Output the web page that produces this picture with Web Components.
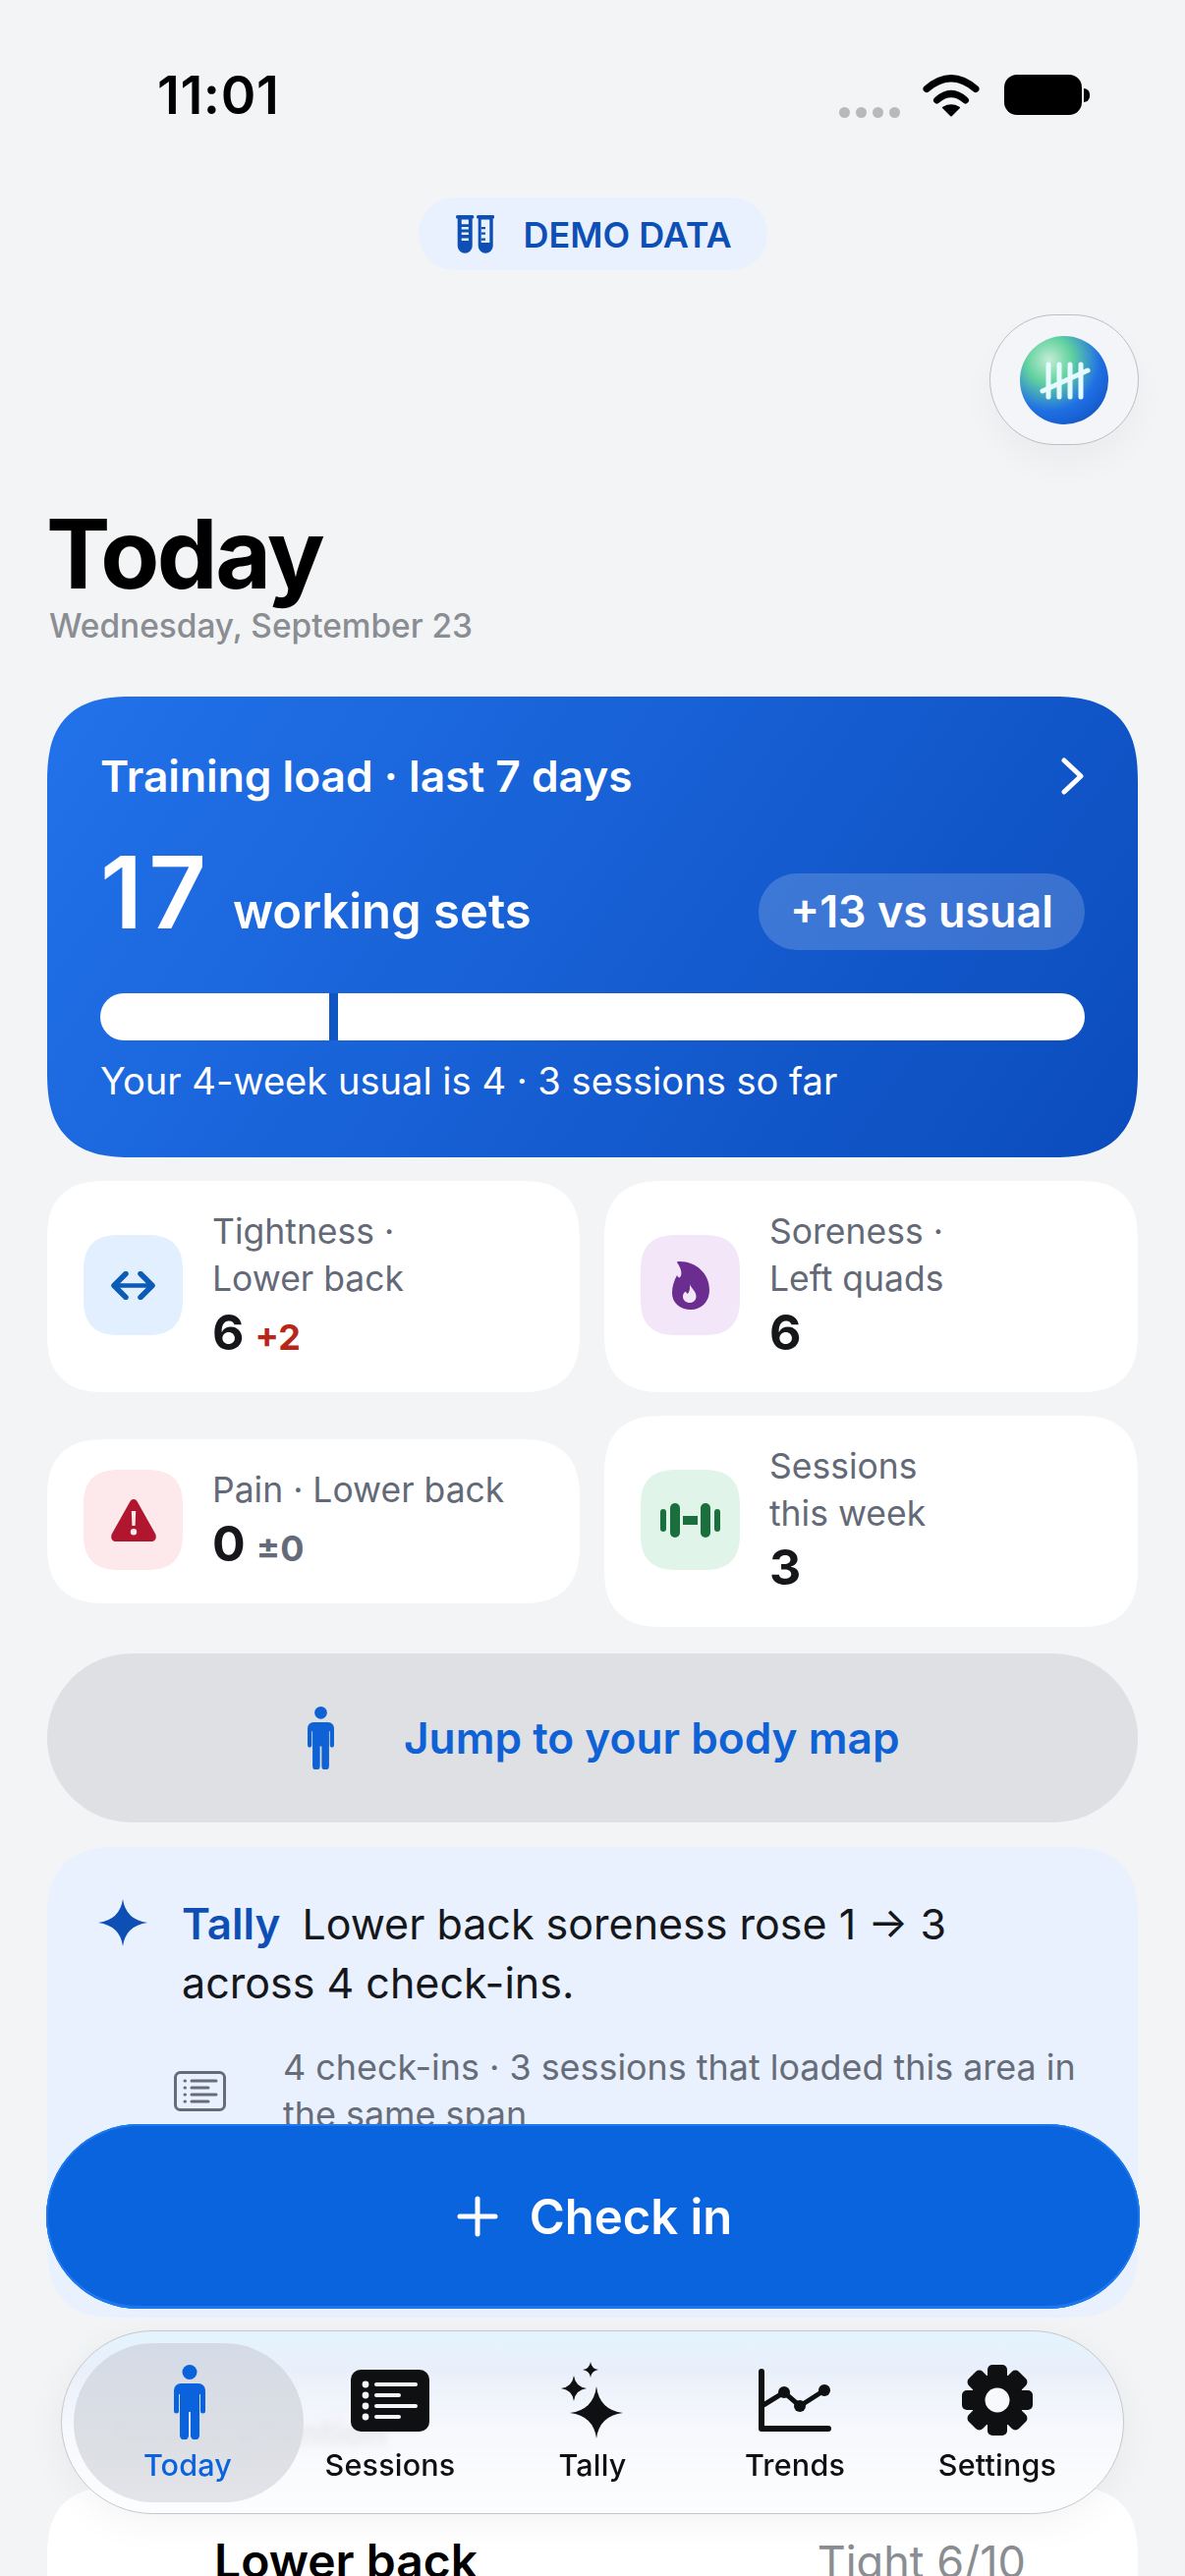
<!DOCTYPE html>
<html lang="en">
<head>
<meta charset="utf-8">
<title>Today</title>
<style>
  html, body { margin: 0; padding: 0; background: #f3f4f6; }
  body { width: 1206px; height: 2622px; overflow: hidden; position: relative; font-family: Inter, "Liberation Sans", sans-serif; }
</style>
</head>
<body>
<today-screen>
  <status-bar time="11:01"></status-bar>
  <demo-pill>DEMO DATA</demo-pill>
  <logo-button></logo-button>
  <page-title date="Wednesday, September 23">Today</page-title>
  <load-card title="Training load · last 7 days" count="17" unit="working sets" delta="+13 vs usual" note="Your 4-week usual is 4 · 3 sessions so far"></load-card>
  <metric-grid>
    <metric-card label="Tightness ·&#10;Lower back" value="6" delta="+2" tone="up" tile="#e2effe">
      <svg width="45" height="29" viewBox="0 0 45 29" fill="none" stroke="#0c5cb6" stroke-linecap="round" stroke-linejoin="round"><path d="M15 2.500 3 14.500l12 12M30 2.500l12 12-12 12" stroke-width="5.500"/><path d="M3 14.500h39" stroke-width="4.500"/></svg>
    </metric-card>
    <metric-card label="Soreness ·&#10;Left quads" value="6" tile="#f2e6f8">
      <svg width="38" height="49" viewBox="0 0 38 49"><path fill="#6b2d8f" fill-rule="evenodd" d="M5 1C4.500.3 6 0 8 0c16 0 30 12 30 29 0 12-8 20-19 20C8 49 0 42 0 32c0-7 2-12 5-18 1 2 2 3 3 2 2.500-2 2-8-3-15zM18 23c1 4 6.500 7 6.500 12.500 0 4-3 6.500-6.500 6.500-4 0-7-2.500-7-6.500 0-2.500 1.500-4.500 3-5 .5 1.500 1 2.500 2 2 1.500-1 2.500-5.500 2-9.500z"/></svg>
    </metric-card>
    <metric-card label="Pain · Lower back" value="0" delta="±0" tone="flat" tile="#fde8ec">
      <svg width="46" height="43" viewBox="0 0 46 43"><path fill="#b0172e" d="M23 0c2 0 3 1 4 3l18 32c2 4 0 8-4 8H5c-4 0-6-4-4-8L19 3c1-2 2-3 4-3z"/><path fill="#fde8ec" d="M20.800 12h4.400l-.6 15h-3.200zM23 30a3.200 3.200 0 1 1 0 6.400 3.200 3.200 0 0 1 0-6.400z"/></svg>
    </metric-card>
    <metric-card label="Sessions&#10;this week" value="3" tile="#e0f4e9">
      <svg width="61" height="35" viewBox="0 0 61 35" fill="#1b6f3c"><rect x="0" y="6" width="6" height="23" rx="3"/><rect x="10" y="0" width="10" height="35" rx="5"/><rect x="23" y="13" width="15" height="9"/><rect x="41" y="0" width="10" height="35" rx="5"/><rect x="55" y="6" width="6" height="23" rx="3"/></svg>
    </metric-card>
  </metric-grid>
  <jump-button>Jump to your body map</jump-button>
  <tally-card name="Tally" text="Lower back soreness rose 1 → 3 across 4 check-ins." evidence="4 check-ins · 3 sessions that loaded this area in the same span"></tally-card>
  <section-title>Needs attention</section-title>
  <area-row name="Lower back" state="Tight 6/10"></area-row>
</today-screen>

<check-in-button>Check in</check-in-button>

<tab-bar>
  <tab-item label="Today" active>
    <svg style="transform: translate(2px, 2px)" width="32" height="76" viewBox="0 0 32 76" fill="#0a62dc"><circle cx="16" cy="7.500" r="7.500"/><path d="M7 19h18a7 7 0 0 1 7 7v21a2.500 2.500 0 0 1-5 0V30h-1v42a4.500 4.500 0 0 1-9 0V48h-2v24a4.500 4.500 0 0 1-9 0V30H5v17a2.500 2.500 0 0 1-5 0V26a7 7 0 0 1 7-7z"/></svg>
  </tab-item>
  <tab-item label="Sessions">
    <svg width="80" height="63" viewBox="0 0 80 63"><rect width="80" height="63" rx="10" fill="#0f1012"/><g fill="#f5f6fa"><circle cx="15" cy="15" r="3.400"/><circle cx="15" cy="26" r="3.400"/><circle cx="15" cy="37" r="3.400"/><circle cx="15" cy="48" r="3.400"/><rect x="24" y="13" width="44" height="4" rx="2"/><rect x="24" y="24" width="27" height="4" rx="2"/><rect x="24" y="35" width="44" height="4" rx="2"/><rect x="24" y="46" width="27" height="4" rx="2"/></g></svg>
  </tab-item>
  <tab-item label="Tally">
    <svg width="64" height="78" viewBox="0 0 64 78" fill="#0f1012"><path d="M36 25Q39 49 63 52 39 55 36 78 33 55 9 52 33 49 36 25z"/><path d="M13 14Q14.500 25.500 26 27 14.500 28.500 13 40 11.500 28.500 0 27 11.500 25.500 13 14z"/><path d="M30 0Q31 7 38 8 31 9 30 16 29 9 22 8 29 7 30 0z"/></svg>
  </tab-item>
  <tab-item label="Trends">
    <svg width="74" height="64" viewBox="0 0 74 64" fill="#0f1012"><path d="M3 3v58h68" fill="none" stroke="#0f1012" stroke-width="6" stroke-linecap="round" stroke-linejoin="round"/><path d="M5 37 26 24l16 14 25-16" fill="none" stroke="#0f1012" stroke-width="5"/><circle cx="26" cy="24" r="6"/><circle cx="42" cy="38" r="6"/><circle cx="67" cy="22" r="6"/></svg>
  </tab-item>
  <tab-item label="Settings">
    <svg width="72" height="72" viewBox="0 0 72 72" fill="#0f1012"><circle cx="36" cy="36" r="27"/><g><rect x="26" y="0" width="20" height="18" rx="5"/><rect x="26" y="54" width="20" height="18" rx="5"/><rect x="26" y="0" width="20" height="18" rx="5" transform="rotate(45 36 36)"/><rect x="26" y="54" width="20" height="18" rx="5" transform="rotate(45 36 36)"/><rect x="26" y="0" width="20" height="18" rx="5" transform="rotate(90 36 36)"/><rect x="26" y="54" width="20" height="18" rx="5" transform="rotate(90 36 36)"/><rect x="26" y="0" width="20" height="18" rx="5" transform="rotate(135 36 36)"/><rect x="26" y="54" width="20" height="18" rx="5" transform="rotate(135 36 36)"/></g><circle cx="36" cy="36" r="12.500" fill="#f8f9fc"/></svg>
  </tab-item>
</tab-bar>

<script>
class Base extends HTMLElement {
  constructor() {
    super();
    this.attachShadow({mode: 'open'});
  }

  connectedCallback() {
    this.shadowRoot.innerHTML = this.render();
  }

  attr(name) {
    return this.getAttribute(name) || '';
  }
}

class TodayScreen extends Base {
  render() {
    return `
      <style>
        :host { display: flex; flex-direction: column; width: 1206px; }
      </style>
      <slot></slot>
    `;
  }
}

class StatusBar extends Base {
  render() {
    return `
      <style>
        :host { display: flex; align-items: flex-start; justify-content: space-between; height: 201px; box-sizing: border-box; padding: 67px 97px 0 160px; }
        .time { font: 600 54px/60px Inter, sans-serif; color: #000; letter-spacing: .6px; }
        .right { display: flex; align-items: flex-start; margin-top: 9px; }
        .dots { display: flex; gap: 6px; margin: 33px 23px 0 0; }
        .dots i { width: 11px; height: 11px; border-radius: 50%; background: #b8b9bc; }
        .wifi { margin-right: 25px; display: block; }
        .batt { width: 79px; height: 41px; border-radius: 13px; background: #000; position: relative; }
        .nub { width: 6px; height: 14px; background: #000; border-radius: 0 7px 7px 0; margin: 14px 0 0 2px; }
      </style>
      <div class="time">${this.attr('time')}</div>
      <div class="right">
        <div class="dots"><i></i><i></i><i></i><i></i></div>
        <svg class="wifi" width="58" height="43" viewBox="0 0 58 43" fill="none" stroke="#000" stroke-linecap="round"><path d="M4 14.500Q29-7 54 14.500" stroke-width="7"/><path d="M14.500 26Q29 13 43.500 26" stroke-width="7"/><path d="M21 33.500Q29 29 37 33.500L29 41.500z" fill="#000" stroke-width="2" stroke-linejoin="round"/></svg>
        <div class="batt"></div><div class="nub"></div>
      </div>
    `;
  }
}

class DemoPill extends Base {
  render() {
    return `
      <style>
        :host { display: flex; align-self: center; align-items: center; gap: 30px; height: 74px; width: 355px; box-sizing: border-box; padding-left: 38px; border-radius: 37px; background: #e9f1fe; color: #0d4fb5; font: 600 36px/44px Inter, sans-serif; white-space: nowrap; }
        svg { flex: none; }
        span { margin-top: 2px; }
      </style>
      <svg width="39" height="39" viewBox="0 0 39 39" fill="#0d4fb5">
        <rect x="0" y="0" width="18.300" height="3.500" rx="1.500"/><rect x="21" y="0" width="18.300" height="3.500" rx="1.500"/>
        <path d="M1.700 2h15v29.200a7.500 7.500 0 0 1-15 0z"/><path d="M22.700 2h15v29.200a7.500 7.500 0 0 1-15 0z"/>
        <path fill="#e9f1fe" d="M5.700 4.500h7.200v4.800H5.700zM5.700 12h7.200v2.500H5.700zM5.700 17.500h7.200V20H5.700zM5.700 23.500h7.200V26H5.700zM25.700 4.500h8.600v23.500h-8.600z"/>
        <path d="M25.700 12H30v2.200h-4.300zM25.700 17.500H30v2.200h-4.300zM25.700 23.500H30v2.200h-4.300z"/>
      </svg>
      <span><slot></slot></span>
    `;
  }
}

class LogoButton extends Base {
  render() {
    return `
      <style>
        :host { display: flex; align-self: flex-end; align-items: center; justify-content: center; width: 152px; height: 133px; box-sizing: border-box; margin: 45px 47px 0 0; border-radius: 67px; background: #f4f5f8; border: 1.500px solid #bdbec1; box-shadow: 0 18px 34px rgba(0,0,0,.035); }
        .orb { width: 90px; height: 90px; border-radius: 50%; background: radial-gradient(circle at 33% 27%, #c4ecd6 0, #62d29f 26%, #1f70e4 58%, #0a45b5 100%); }
        svg { display: block; }
      </style>
      <div class="orb">
        <svg width="90" height="90" viewBox="0 0 90 90" fill="none" stroke="#e6fbff" stroke-width="5" stroke-linecap="round">
          <path d="M29 29v33M40 29v33M51 29v33M62 29v33M23 56l46-21"/>
        </svg>
      </div>
    `;
  }
}

class PageTitle extends Base {
  render() {
    return `
      <style>
        :host { display: block; padding: 56px 50px 0; }
        h1 { margin: 0 0 0 -3px; font: 700 98px/110px Inter, sans-serif; color: #000; letter-spacing: -2.500px; }
        p { margin: -2px 0 0; font: 500 33.400px/40px Inter, sans-serif; color: #8a8d92; }
      </style>
      <h1><slot></slot></h1>
      <p>${this.attr('date')}</p>
    `;
  }
}

class LoadCard extends Base {
  render() {
    return `
      <style>
        :host { display: block; margin: 52px 48px 0; height: 469px; box-sizing: border-box; padding: 52px 54px 0; border-radius: 88px; corner-shape: superellipse(1.4); background: linear-gradient(125deg, #2272ea 0%, #0b4cbd 100%); color: #fff; }
        .top { display: flex; justify-content: space-between; align-items: center; font: 600 44.300px/58px Inter, sans-serif; }
        .top svg { margin-right: 1px; }
        .mid { display: flex; align-items: baseline; margin-top: 33px; height: 112px; }
        .count { font: 600 102px/112px Inter, sans-serif; letter-spacing: 6px; }
        .unit { font: 600 49px/60px Inter, sans-serif; margin-left: 21px; }
        .pill { align-self: flex-start; margin: 37px 0 0 auto; height: 78px; box-sizing: border-box; padding: 0 32px; border-radius: 39px; background: rgba(255,255,255,.18); font: 600 44.800px/78px Inter, sans-serif; }
        .bar { height: 48px; margin-top: 47px; border-radius: 24px; background: #fff; position: relative; }
        .bar i { position: absolute; left: 233px; top: 0; bottom: 0; width: 9px; background: #0f55c4; }
        .note { font: 400 38.100px/50px Inter, sans-serif; margin-top: 16px; }
      </style>
      <div class="top">
        <span>${this.attr('title')}</span>
        <svg width="24" height="38" viewBox="0 0 24 38" fill="none" stroke="#fff" stroke-width="5" stroke-linecap="round" stroke-linejoin="round"><path d="M4 3l17 16L4 35"/></svg>
      </div>
      <div class="mid">
        <span class="count">${this.attr('count')}</span>
        <span class="unit">${this.attr('unit')}</span>
        <span class="pill">${this.attr('delta')}</span>
      </div>
      <div class="bar"><i></i></div>
      <div class="note">${this.attr('note')}</div>
    `;
  }
}

class MetricGrid extends Base {
  render() {
    return `
      <style>
        :host { display: grid; grid-template-columns: 542px 543px; column-gap: 25px; row-gap: 24px; align-items: center; margin: 24px 48px 0; }
      </style>
      <slot></slot>
    `;
  }
}

class MetricCard extends Base {
  render() {
    const tone = this.attr('tone');
    return `
      <style>
        :host { display: flex; align-items: center; gap: 30px; box-sizing: border-box; padding: 28px 20px 31px 37px; border-radius: 62px; corner-shape: superellipse(1.4); background: #fff; }
        .tile { flex: none; width: 101px; height: 102px; border-radius: 38px; corner-shape: superellipse(1.4); background: ${this.attr('tile')}; display: flex; align-items: center; justify-content: center; }
        .label { font: 400 35.500px/48px Inter, sans-serif; color: #636977; white-space: pre-line; }
        .value { font: 700 50px/60px Inter, sans-serif; color: #15171b; }
        .delta { font: 700 36px Inter, sans-serif; margin-left: 11px; color: ${tone === 'up' ? '#b8261a' : '#646b78'}; }
      </style>
      <div class="tile"><slot></slot></div>
      <div>
        <div class="label">${this.attr('label')}</div>
        <div class="value">${this.attr('value')}${this.attr('delta') ? `<span class="delta">${this.attr('delta')}</span>` : ''}</div>
      </div>
    `;
  }
}

class JumpButton extends Base {
  render() {
    return `
      <style>
        :host { display: flex; align-items: center; height: 172px; margin: 27px 48px 0; padding-left: 265px; box-sizing: border-box; border-radius: 86px; background: #dfe0e4; color: #0f62d6; font: 600 44.200px Inter, sans-serif; gap: 71px; }
      </style>
      <svg width="27" height="64" viewBox="0 0 32 76" fill="#0f62d6"><circle cx="16" cy="7.500" r="7.500"/><path d="M7 19h18a7 7 0 0 1 7 7v21a2.500 2.500 0 0 1-5 0V30h-1v42a4.500 4.500 0 0 1-9 0V48h-2v24a4.500 4.500 0 0 1-9 0V30H5v17a2.500 2.500 0 0 1-5 0V26a7 7 0 0 1 7-7z"/></svg>
      <span><slot></slot></span>
    `;
  }
}

class TallyCard extends Base {
  render() {
    return `
      <style>
        :host { display: block; height: 479px; box-sizing: border-box; margin: 25px 48px 0; padding: 48px 40px 0 52px; border-radius: 74px; corner-shape: superellipse(1.4); background: #e9f1fe; }
        .head { display: flex; gap: 35px; align-items: flex-start; }
        .head svg { flex: none; margin-top: 5px; }
        .text { font: 400 43px/60px Inter, sans-serif; color: #15171b; max-width: 830px; }
        b { font-size: 44px; font-weight: 600; color: #0d4fb5; margin-right: 22px; }
        .ev { display: flex; align-items: center; gap: 58px; margin: 32px 0 0 77px; }
        .ev svg { flex: none; }
        .ev span { font: 400 35.900px/48px Inter, sans-serif; color: #666c78; }
      </style>
      <div class="head">
        <svg width="50" height="48" viewBox="0 0 50 48" fill="#0d4fb5"><path d="M25 0Q28 21 50 24 28 27 25 48 22 27 0 24 22 21 25 0z"/></svg>
        <div class="text"><b>${this.attr('name')}</b>${this.attr('text')}</div>
      </div>
      <div class="ev">
        <svg width="53" height="41" viewBox="0 0 53 41" fill="none" stroke="#666c78" stroke-width="3" stroke-linecap="round"><rect x="1.500" y="1.500" width="50" height="38" rx="5"/><path d="M11 10h.5M11 17h.5M11 24h.5M11 31h.5M18 10h25M18 17h17M18 24h25M18 31h17"/></svg>
        <span>${this.attr('evidence')}</span>
      </div>
    `;
  }
}

class SectionTitle extends Base {
  render() {
    return `
      <style>
        :host { display: block; margin: 94px 0 0 115px; font: 700 36px/48px Inter, sans-serif; color: #15171b; }
      </style>
      <slot></slot>
    `;
  }
}

class AreaRow extends Base {
  render() {
    return `
      <style>
        :host { display: flex; justify-content: space-between; align-items: baseline; height: 200px; box-sizing: border-box; margin: 30px 48px 0; padding: 46px 114px 0 170px; border-radius: 74px; corner-shape: superellipse(1.4); background: #fff; }
        .name { font: 600 48px/60px Inter, sans-serif; color: #000; }
        .state { font: 400 45px/60px Inter, sans-serif; color: #8a8d92; }
      </style>
      <span class="name">${this.attr('name')}</span>
      <span class="state">${this.attr('state')}</span>
    `;
  }
}

class CheckInButton extends Base {
  render() {
    return `
      <style>
        :host { position: absolute; left: 47px; right: 46px; bottom: 272px; height: 188px; box-sizing: border-box; padding-left: 3px; display: flex; align-items: center; justify-content: center; gap: 32px; border-radius: 94px; background: #0a64dd; box-shadow: inset 0 2px 0 #1e78ee, inset 0 -3px 0 #1e78ee, inset 2px 0 0 #1e78ee, inset -2px 0 0 #1e78ee; color: #fff; font: 600 49px Inter, sans-serif; }
        svg { display: block; }
      </style>
      <svg width="42" height="42" viewBox="0 0 42 42" fill="none" stroke="#fff" stroke-width="5" stroke-linecap="round"><path d="M21 3v36M3 21h36"/></svg>
      <span><slot></slot></span>
    `;
  }
}

class TabBar extends Base {
  render() {
    return `
      <style>
        :host { position: absolute; left: 62px; right: 62px; bottom: 63px; height: 187px; box-sizing: border-box; display: grid; grid-template-columns: repeat(5, 1fr); padding: 0 25px; border-radius: 94px; border: 1.500px solid #c4c6c9; background: linear-gradient(180deg, rgba(226,243,254,.92) 0%, rgba(232,238,250,.92) 20%, rgba(247,248,252,.92) 55%, rgba(252,253,254,.96) 100%); backdrop-filter: blur(4px); box-shadow: 0 8px 40px rgba(0,0,0,.05); }
      </style>
      <slot></slot>
    `;
  }
}

class TabItem extends Base {
  render() {
    return `
      <style>
        :host { display: flex; flex-direction: column; align-items: center; position: relative; color: #0f1012; font: 500 30.500px Inter, sans-serif; letter-spacing: .2px; }
        :host([active]) { color: #0a62dc; }
        :host([active])::before { content: ""; position: absolute; left: -13px; right: -15px; top: 12px; height: 162px; border-radius: 81px; background: linear-gradient(180deg, rgba(210,217,229,.92) 0%, rgba(216,219,225,.92) 50%, rgba(224,226,231,.92) 100%); }
        .icon { height: 80px; margin-top: 30px; display: flex; align-items: center; justify-content: center; position: relative; }
        .label { position: relative; line-height: 36px; margin-top: 8px; }
      </style>
      <div class="icon"><slot></slot></div>
      <div class="label">${this.attr('label')}</div>
    `;
  }
}

customElements.define('today-screen', TodayScreen);
customElements.define('status-bar', StatusBar);
customElements.define('demo-pill', DemoPill);
customElements.define('logo-button', LogoButton);
customElements.define('page-title', PageTitle);
customElements.define('load-card', LoadCard);
customElements.define('metric-grid', MetricGrid);
customElements.define('metric-card', MetricCard);
customElements.define('jump-button', JumpButton);
customElements.define('tally-card', TallyCard);
customElements.define('section-title', SectionTitle);
customElements.define('area-row', AreaRow);
customElements.define('check-in-button', CheckInButton);
customElements.define('tab-bar', TabBar);
customElements.define('tab-item', TabItem);
</script>
</body>
</html>
